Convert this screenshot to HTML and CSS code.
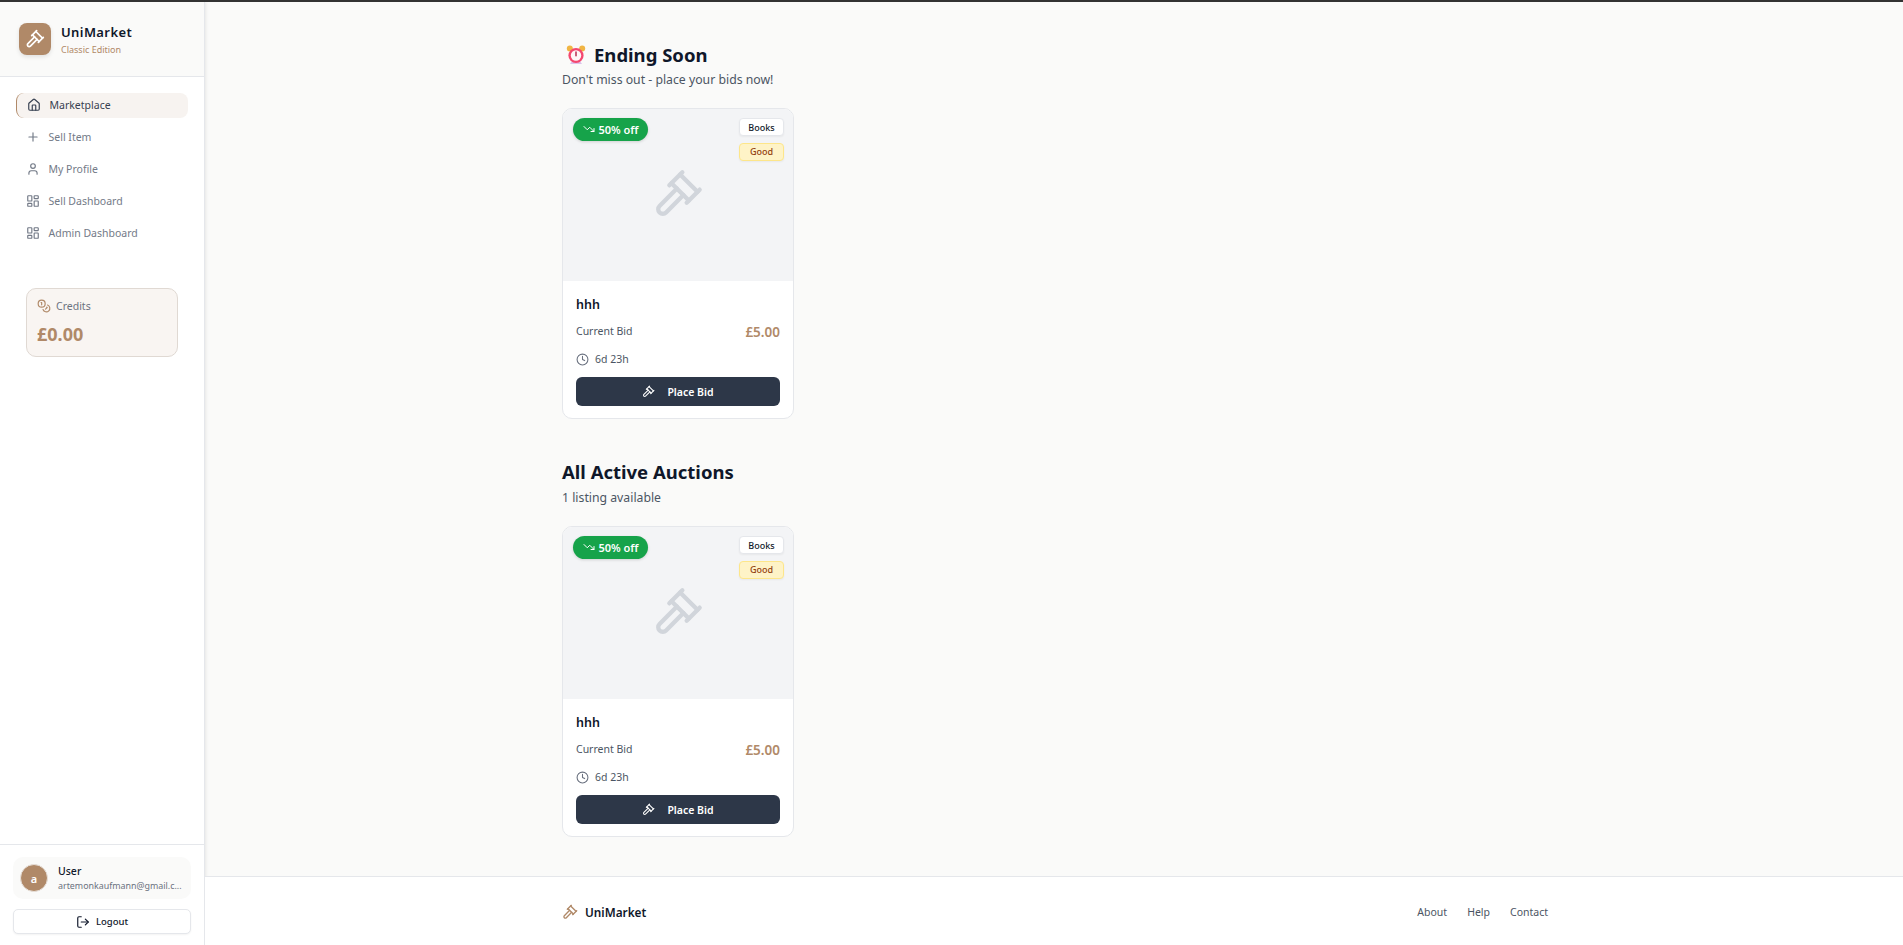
FILE: index.html
```html
<!DOCTYPE html>
<html lang="en">
<head>
<meta charset="utf-8">
<title>UniMarket</title>
<link rel="stylesheet" href="styles.css">
</head>
<body>
<svg class="sprite" aria-hidden="true">
  <symbol id="gavel" viewBox="0 0 24 24"><path d="m14.5 12.5-8 8a2.119 2.119 0 1 1-3-3l8-8"/><path d="m16 16 6-6"/><path d="m8 8 6-6"/><path d="m9 7 8 8"/><path d="m21 11-8-8"/></symbol>
  <symbol id="home" viewBox="0 0 24 24"><path d="M15 21v-8a1 1 0 0 0-1-1h-4a1 1 0 0 0-1 1v8"/><path d="M3 10a2 2 0 0 1 .709-1.528l7-5.999a2 2 0 0 1 2.582 0l7 5.999A2 2 0 0 1 21 10v9a2 2 0 0 1-2 2H5a2 2 0 0 1-2-2z"/></symbol>
  <symbol id="plus" viewBox="0 0 24 24"><path d="M5 12h14"/><path d="M12 5v14"/></symbol>
  <symbol id="user" viewBox="0 0 24 24"><path d="M19 21v-2a4 4 0 0 0-4-4H9a4 4 0 0 0-4 4v2"/><circle cx="12" cy="7" r="4"/></symbol>
  <symbol id="dash" viewBox="0 0 24 24"><rect x="3" y="3" width="7" height="9" rx="1"/><rect x="14" y="3" width="7" height="5" rx="1"/><rect x="14" y="12" width="7" height="9" rx="1"/><rect x="3" y="16" width="7" height="5" rx="1"/></symbol>
  <symbol id="coins" viewBox="0 0 24 24"><circle cx="8" cy="8" r="6"/><path d="M18.09 10.37A6 6 0 1 1 10.34 18"/><path d="M7 6h1v4"/><path d="m16.71 13.88.7.71-2.82 2.82"/></symbol>
  <symbol id="logout" viewBox="0 0 24 24"><path d="M9 21H5a2 2 0 0 1-2-2V5a2 2 0 0 1 2-2h4"/><path d="m16 17 5-5-5-5"/><path d="M21 12H9"/></symbol>
  <symbol id="clock" viewBox="0 0 24 24"><circle cx="12" cy="12" r="10"/><path d="M12 6v6l4 2"/></symbol>
  <symbol id="down" viewBox="0 0 24 24"><path d="m22 17-8.5-8.5-5 5L2 7"/><path d="M16 17h6v-6"/></symbol>
</svg>
<div class="app">
  <aside class="sidebar">
    <div class="brand">
      <div class="brand-logo"><svg class="icon i20"><use href="#gavel"/></svg></div>
      <div>
        <div class="brand-name">UniMarket</div>
        <div class="brand-sub">Classic Edition</div>
      </div>
    </div>
    <nav class="nav">
      <a class="nav-item active"><svg class="icon i14"><use href="#home"/></svg>Marketplace</a>
      <a class="nav-item"><svg class="icon i14"><use href="#plus"/></svg>Sell Item</a>
      <a class="nav-item"><svg class="icon i14"><use href="#user"/></svg>My Profile</a>
      <a class="nav-item"><svg class="icon i14"><use href="#dash"/></svg>Sell Dashboard</a>
      <a class="nav-item"><svg class="icon i14"><use href="#dash"/></svg>Admin Dashboard</a>
    </nav>
    <div class="credits">
      <div class="credits-label"><svg class="icon i14"><use href="#coins"/></svg>Credits</div>
      <div class="credits-value">£0.00</div>
    </div>
    <div class="account">
      <div class="user-box">
        <div class="avatar">a</div>
        <div class="user-text">
          <div class="user-name">User</div>
          <div class="user-mail">artemonkaufmann@gmail.c...</div>
        </div>
      </div>
      <button class="logout"><svg class="icon i14"><use href="#logout"/></svg>Logout</button>
    </div>
  </aside>
  <div class="main">
    <main class="content">
      <section class="section">
        <h2 class="title">
          <svg class="emoji" viewBox="0 0 20 20" aria-label="alarm clock">
            <path d="M4 19h12l-2-3H6z" fill="#dcc3ea"/>
            <circle cx="3.8" cy="3.6" r="3" fill="#f0b544"/><circle cx="16.2" cy="3.6" r="3" fill="#f0b544"/>
            <circle cx="10" cy="10.5" r="7.6" fill="#f4476f"/><circle cx="10" cy="10.5" r="5.2" fill="#fff5f7"/>
            <path d="M10 7v3.8" stroke="#b8284f" stroke-width="1.5" fill="none" stroke-linecap="round"/>
          </svg>
          Ending Soon
        </h2>
        <p class="subtitle">Don't miss out - place your bids now!</p>
        <div class="grid">
          <article class="card">
            <div class="thumb">
              <span class="sale"><svg class="icon i12"><use href="#down"/></svg>50% off</span>
              <div class="tags"><span class="tag">Books</span><span class="tag good">Good</span></div>
              <svg class="icon placeholder"><use href="#gavel"/></svg>
            </div>
            <div class="body">
              <h3 class="item-name">hhh</h3>
              <div class="bid-row"><span class="bid-label">Current Bid</span><span class="bid-value">£5.00</span></div>
              <div class="time"><svg class="icon i13"><use href="#clock"/></svg>6d 23h</div>
              <button class="bid-btn"><svg class="icon i13"><use href="#gavel"/></svg>Place Bid</button>
            </div>
          </article>
        </div>
      </section>
      <section class="section">
        <h2 class="title">All Active Auctions</h2>
        <p class="subtitle">1 listing available</p>
        <div class="grid">
          <article class="card">
            <div class="thumb">
              <span class="sale"><svg class="icon i12"><use href="#down"/></svg>50% off</span>
              <div class="tags"><span class="tag">Books</span><span class="tag good">Good</span></div>
              <svg class="icon placeholder"><use href="#gavel"/></svg>
            </div>
            <div class="body">
              <h3 class="item-name">hhh</h3>
              <div class="bid-row"><span class="bid-label">Current Bid</span><span class="bid-value">£5.00</span></div>
              <div class="time"><svg class="icon i13"><use href="#clock"/></svg>6d 23h</div>
              <button class="bid-btn"><svg class="icon i13"><use href="#gavel"/></svg>Place Bid</button>
            </div>
          </article>
        </div>
      </section>
    </main>
    <footer class="footer">
      <div class="footer-inner">
        <div class="footer-brand"><svg class="icon i16"><use href="#gavel"/></svg>UniMarket</div>
        <div class="footer-links"><a>About</a><a>Help</a><a>Contact</a></div>
      </div>
    </footer>
  </div>
</div>
</body>
</html>
```
FILE: styles.css
```css
* { box-sizing: border-box; }
html, body { margin: 0; height: 100%; }
body {
  font-family: "Noto Sans", "Open Sans", sans-serif;
  color: #0f172a;
  background: #fafaf9;
  border-top: 2px solid #333;
  overflow: hidden;
}
.sprite { display: none; }
.icon { fill: none; stroke: currentColor; stroke-width: 2; stroke-linecap: round; stroke-linejoin: round; flex: none; }
.i12 { width: 12px; height: 12px; }
.i13 { width: 13px; height: 13px; }
.i14 { width: 14px; height: 14px; }
.i16 { width: 16px; height: 16px; }
.i20 { width: 20px; height: 20px; }

.app { display: flex; height: 943px; }

.sidebar {
  width: 205px;
  flex: none;
  display: flex;
  flex-direction: column;
  background: #fff;
  border-right: 1px solid #e5e7eb;
  box-shadow: 1px 0 3px rgba(0,0,0,.08);
}
.brand {
  height: 75px;
  display: flex;
  align-items: center;
  gap: 10px;
  padding: 0 19px;
  background: #fafaf9;
  border-bottom: 1px solid #e5e7eb;
}
.brand-logo {
  width: 32px; height: 32px;
  border-radius: 8px;
  background: #b08968;
  color: #fff;
  display: flex; align-items: center; justify-content: center;
  box-shadow: 0 2px 4px rgba(0,0,0,.1);
}
.brand-name { font-size: 13px; font-weight: 600; line-height: 18px; letter-spacing: .4px; margin-top: 1px; }
.brand-sub { font-size: 9px; line-height: 13px; color: #b08968; margin-top: 2px; }

.nav { display: flex; flex-direction: column; gap: 7px; padding: 16px 16px 0; }
.nav-item {
  height: 25px;
  display: flex; align-items: center;
  gap: 9px;
  padding-left: 9.5px;
  padding-bottom: 1px;
  font-size: 10.5px;
  color: #737a87;
  border-radius: 8px;
}
.nav-item.active { color: #374151; background: #f7f3f0; border-left: 1px solid #b08968; }

.credits {
  margin: 42px 26px 0;
  height: 69px;
  padding: 9px 10px;
  background: #f9f5f2;
  border: 1px solid #e0d9d3;
  border-radius: 10px;
}
.credits-label { display: flex; align-items: center; gap: 5px; font-size: 10.5px; color: #6b7280; height: 16px; }
.credits-label .icon { color: #b08968; }
.credits-value { font-size: 18px; font-weight: 700; color: #b08968; line-height: 24px; margin-top: 8px; }

.account { margin-top: auto; border-top: 1px solid #e5e7eb; padding: 12px 13px 11px; }
.user-box { display: flex; align-items: center; gap: 10px; height: 42px; padding: 0 7px; background: #fafaf9; border-radius: 10px; }
.avatar {
  width: 28px; height: 28px; flex: none;
  border-radius: 50%;
  background: #b08968; color: #fff;
  border: 1px solid #e7e0da;
  display: flex; align-items: center; justify-content: center;
  font-size: 11px; font-weight: 600;
}
.user-text { min-width: 0; }
.user-name { font-size: 10.5px; font-weight: 500; line-height: 14px; }
.user-mail { font-size: 8.9px; line-height: 13px; margin-top: 1px; color: #6b7280; white-space: nowrap; }
.logout {
  width: 100%; height: 25px; margin-top: 10px;
  display: flex; align-items: center; justify-content: center; gap: 6px;
  font: 500 9.5px "Noto Sans", sans-serif;
  color: #0f172a;
  background: #fff;
  border: 1px solid #e5e7eb;
  border-radius: 5px;
  box-shadow: 0 1px 2px rgba(0,0,0,.05);
}

.main { flex: 1; min-width: 0; display: flex; flex-direction: column; }
.content { flex: 1; width: 986px; margin: 0 auto; padding-top: 40px; position: relative; left: 1px; }
.section + .section { margin-top: 40px; }
.section + .section .title { margin-bottom: 5px; }
.title { display: flex; align-items: center; gap: 8px; margin: 0; font-size: 18.5px; font-weight: 700; line-height: 25px; color: #0f172a; }
.emoji { width: 20px; height: 20px; margin-left: 4px; }
.subtitle { margin: 4px 0 0; font-size: 12.25px; line-height: 18px; color: #4b5563; }
.grid { display: grid; grid-template-columns: repeat(4, 232px); column-gap: 20px; margin-top: 19px; }

.card { background: #fff; border: 1px solid #e5e7eb; border-radius: 10px; overflow: hidden; }
.thumb {
  position: relative;
  height: 172px;
  background: #f3f4f6;
  display: flex; align-items: center; justify-content: center;
}
.placeholder { width: 52px; height: 52px; color: #d1d5db; position: relative; top: -1px; }
.sale {
  position: absolute; left: 10px; top: 9px;
  height: 23px; padding: 0 9.5px 1px;
  display: flex; align-items: center; gap: 4px;
  font-size: 11px; font-weight: 600; color: #fff;
  background: #16a34a; border-radius: 12px;
  box-shadow: 0 1px 3px rgba(0,0,0,.15);
}
.tags { position: absolute; right: 9px; top: 9px; display: flex; flex-direction: column; align-items: flex-end; gap: 7px; }
.tag {
  height: 18px; min-width: 45px;
  display: flex; align-items: center; justify-content: center;
  font-size: 9px; font-weight: 500; color: #0f172a;
  background: #fff; border: 1px solid #e5e7eb; border-radius: 4px;
  box-shadow: 0 1px 2px rgba(0,0,0,.05);
}
.tag.good { color: #92400e; background: #fef3c7; border-color: #fde68a; padding-bottom: 1px; }

.body { padding: 14px 13px 12px; }
.item-name { margin: 0; font-size: 12.5px; font-weight: 600; line-height: 20px; color: #0f172a; }
.bid-row { display: flex; justify-content: space-between; align-items: center; margin-top: 5px; height: 24px; }
.bid-label { font-size: 10.5px; color: #4b5563; position: relative; top: -1px; }
.bid-value { font-size: 13.5px; font-weight: 600; color: #b08968; }
.time { display: flex; align-items: center; gap: 6px; margin-top: 7px; height: 16px; font-size: 10.5px; color: #4b5563; }
.time .icon { color: #6b7280; }
.bid-btn {
  width: 100%; height: 29px; margin-top: 10px;
  display: flex; align-items: center; justify-content: center; gap: 12px;
  font: 600 10.5px "Noto Sans", sans-serif;
  color: #fff; background: #2d3748;
  border: 0; border-radius: 6px;
}

.footer { height: 69px; flex: none; padding-top: 1px; background: #fff; border-top: 1px solid #e5e7eb; }
.footer-inner { width: 986px; height: 100%; margin: 0 auto; position: relative; left: 1px; display: flex; align-items: center; justify-content: space-between; }
.footer-brand { display: flex; align-items: center; gap: 7px; font-size: 11.8px; font-weight: 600; color: #0f172a; }
.footer-brand .icon { color: #b08968; }
.footer-links { display: flex; gap: 20px; font-size: 10.5px; color: #4b5563; }
```
